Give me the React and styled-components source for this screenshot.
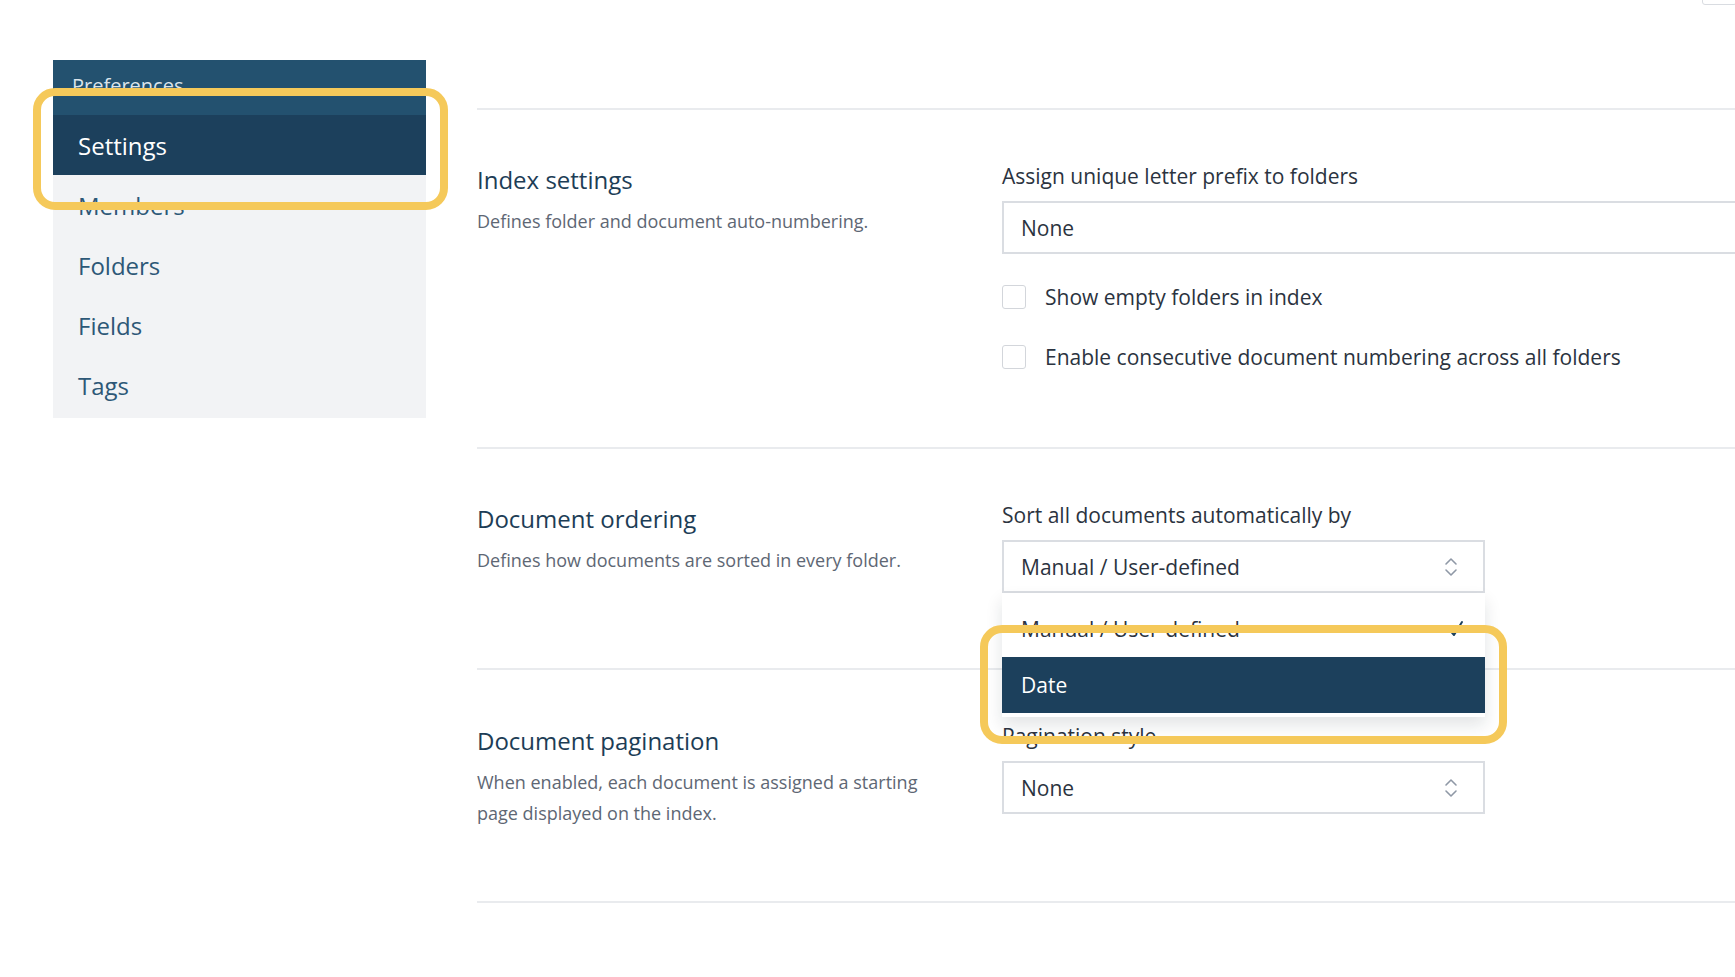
import React from "react";
import styled, { createGlobalStyle } from "styled-components";

const Global = createGlobalStyle`
  html, body {
    margin: 0;
    padding: 0;
    background: #fff;
    overflow: hidden;
  }
  body {
    font-family: "Open Sans", "Noto Sans", sans-serif;
  }
`;

const Page = styled.div`
  position: relative;
  display: flex;
  align-items: flex-start;
  width: 1735px;
  height: 977px;
  box-sizing: border-box;
  padding: 60px 0 0 53px;
  overflow: hidden;
`;

const Corner = styled.div`
  position: absolute;
  top: -5px;
  right: -2px;
  width: 33px;
  height: 8px;
  border: 1.5px solid #d9dce1;
  border-radius: 3px;
`;

const Sidebar = styled.nav`
  width: 373px;
  flex-shrink: 0;
  background: #f2f3f5;
  padding-bottom: 3px;
`;

const SidebarHeader = styled.div`
  height: 55px;
  box-sizing: border-box;
  padding: 14px 0 0 19px;
  background: #23516f;
  color: #dbe4eb;
  font-size: 20px;
  line-height: 24px;
`;

const NavItem = styled.div`
  position: relative;
  height: 60px;
  display: flex;
  align-items: center;
  padding-left: 25px;
  font-size: 24px;
  color: ${(p) => (p.$active ? "#ffffff" : "#2d5877")};
  background: ${(p) => (p.$active ? "#1c405c" : "transparent")};
`;

const Highlight = styled.div`
  position: absolute;
  top: ${(p) => p.$t}px;
  bottom: ${(p) => p.$b}px;
  left: ${(p) => p.$l}px;
  right: ${(p) => p.$r}px;
  border: 8px solid #f5c95a;
  border-radius: 22px;
  pointer-events: none;
  z-index: 10;
`;

const Main = styled.main`
  margin-left: 51px;
  flex: 0 0 1400px;
  padding-top: 48px;
`;

const Section = styled.section`
  display: grid;
  grid-template-columns: 525px 1fr;
  align-items: start;
  border-top: 2px solid #e9ebee;
  padding: 52px 0 ${(p) => p.$pb || 75}px;
  ${(p) => p.$last && "border-bottom: 2px solid #e9ebee;"}
`;

const Intro = styled.div`
  padding-top: ${(p) => p.$pt || 2}px;
`;

const Heading = styled.h2`
  margin: 0;
  font-size: 24px;
  font-weight: 400;
  line-height: 32px;
  color: #1d3d56;
`;

const Desc = styled.p`
  margin: 10px 0 0;
  max-width: 465px;
  font-size: 18px;
  line-height: 31px;
  color: #5e6774;
`;

const Field = styled.div`
  display: flex;
  flex-direction: column;
`;

const FieldLabel = styled.label`
  font-size: 21px;
  line-height: 28px;
  color: #2b3340;
`;

const SelectWrap = styled.div`
  position: relative;
  margin-top: 11px;
  width: ${(p) => (p.$full ? "100%" : "483px")};
`;

const SelectBox = styled.div`
  height: 53px;
  box-sizing: border-box;
  display: flex;
  align-items: center;
  justify-content: space-between;
  padding: 0 24px 0 17px;
  border: 2px solid #dadde2;
  font-size: 21px;
  color: #2b3340;
  background: #fff;
`;

const Menu = styled.div`
  position: absolute;
  top: 100%;
  left: 0;
  right: 0;
  padding: 8px 0 4px;
  background: #fff;
  box-shadow: 0 8px 16px rgba(20, 30, 45, 0.12);
  z-index: 5;
`;

const Option = styled.div`
  position: relative;
  height: 56px;
  display: flex;
  align-items: center;
  justify-content: space-between;
  padding: 0 20px 0 19px;
  font-size: 21px;
  color: ${(p) => (p.$hover ? "#ffffff" : "#2b3340")};
  background: ${(p) => (p.$hover ? "#1c405c" : "transparent")};
`;

const CheckRow = styled.div`
  display: flex;
  align-items: center;
  gap: 19px;
  height: 30px;
  margin-top: ${(p) => p.$mt}px;
  font-size: 21px;
  color: #2b3340;
`;

const Box = styled.span`
  width: 24px;
  height: 24px;
  box-sizing: border-box;
  border: 1.5px solid #d3d6db;
  border-radius: 3px;
  background: #fff;
`;

const Updown = () => (
  <svg width="16" height="22" viewBox="0 0 16 22" fill="none" stroke="#8f98a6" strokeWidth="1.6" strokeLinecap="round" strokeLinejoin="round">
    <path d="M3 8 L8 3 L13 8" />
    <path d="M3 14 L8 19 L13 14" />
  </svg>
);

const Check = () => (
  <svg width="20" height="20" viewBox="0 0 20 20" fill="none" stroke="#1c405c" strokeWidth="2" strokeLinecap="round" strokeLinejoin="round">
    <path d="M4 10 L9 16 L17 3" />
  </svg>
);

const navItems = ["Settings", "Members", "Folders", "Fields", "Tags"];

export default function App() {
  return (
    <>
      <Global />
      <Page>
        <Corner />
        <Sidebar>
          <SidebarHeader>Preferences</SidebarHeader>
          {navItems.map((item) => (
            <NavItem key={item} $active={item === "Settings"}>
              {item}
              {item === "Settings" && <Highlight $t={-27} $b={-35} $l={-20} $r={-22} />}
            </NavItem>
          ))}
        </Sidebar>

        <Main>
          <Section>
            <Intro>
              <Heading>Index settings</Heading>
              <Desc>Defines folder and document auto-numbering.</Desc>
            </Intro>
            <Field>
              <FieldLabel>Assign unique letter prefix to folders</FieldLabel>
              <SelectWrap $full>
                <SelectBox>None</SelectBox>
              </SelectWrap>
              <CheckRow $mt={28}>
                <Box />
                Show empty folders in index
              </CheckRow>
              <CheckRow $mt={30}>
                <Box />
                Enable consecutive document numbering across all folders
              </CheckRow>
            </Field>
          </Section>

          <Section>
            <Intro>
              <Heading>Document ordering</Heading>
              <Desc>Defines how documents are sorted in every folder.</Desc>
            </Intro>
            <Field>
              <FieldLabel>Sort all documents automatically by</FieldLabel>
              <SelectWrap>
                <SelectBox>
                  Manual / User-defined
                  <Updown />
                </SelectBox>
                <Menu>
                  <Option>
                    Manual / User-defined
                    <Check />
                  </Option>
                  <Option $hover>
                    Date
                    <Highlight $t={-32} $b={-31} $l={-22} $r={-22} />
                  </Option>
                </Menu>
              </SelectWrap>
            </Field>
          </Section>

          <Section $last $pb={72}>
            <Intro $pt={3}>
              <Heading>Document pagination</Heading>
              <Desc>When enabled, each document is assigned a starting page displayed on the index.</Desc>
            </Intro>
            <Field>
              <FieldLabel>Pagination style</FieldLabel>
              <SelectWrap>
                <SelectBox>
                  None
                  <Updown />
                </SelectBox>
              </SelectWrap>
            </Field>
          </Section>
        </Main>
      </Page>
    </>
  );
}
